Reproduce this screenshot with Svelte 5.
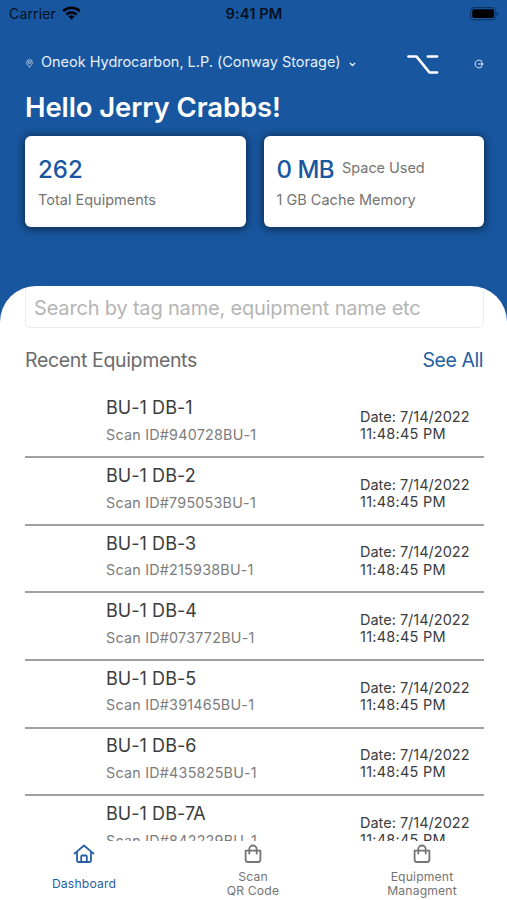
<script lang="ts">
  type Equipment = {
    name: string;
    scanId: string;
    date: string;
    time: string;
  };

  type Tab = {
    id: string;
    lines: string[];
    icon: "home" | "bag";
  };

  const equipments: Equipment[] = [
    ["BU-1 DB-1", "940728BU-1"],
    ["BU-1 DB-2", "795053BU-1"],
    ["BU-1 DB-3", "215938BU-1"],
    ["BU-1 DB-4", "073772BU-1"],
    ["BU-1 DB-5", "391465BU-1"],
    ["BU-1 DB-6", "435825BU-1"],
    ["BU-1 DB-7A", "842229BU-1"],
  ].map(([name, scanId]) => ({
    name,
    scanId,
    date: "7/14/2022",
    time: "11:48:45 PM",
  }));

  const tabs: Tab[] = [
    { id: "dashboard", lines: ["Dashboard"], icon: "home" },
    { id: "scan", lines: ["Scan", "QR Code"], icon: "bag" },
    { id: "equipment", lines: ["Equipment", "Managment"], icon: "bag" },
  ];

  let activeTab = $state("dashboard");
  let query = $state("");
</script>

<div class="screen">
  <header class="header">
    <div class="status">
      <div class="status__carrier">
        <span>Carrier</span>
        <svg width="19" height="14" viewBox="0 0 19 14" aria-hidden="true">
          <g fill="none" stroke="#000" stroke-width="2.5">
            <path d="M1.2 5.2a11.8 11.8 0 0 1 16.6 0" />
            <path d="M4.3 8.6a7.4 7.4 0 0 1 10.4 0" />
          </g>
          <path d="M9.5 13.6 6.5 10.6a4.3 4.3 0 0 1 6 0z" />
        </svg>
      </div>
      <span class="status__time">9:41 PM</span>
      <svg class="status__battery" width="29" height="14" viewBox="0 0 29 14" aria-hidden="true">
        <rect x=".6" y=".6" width="25.2" height="12.2" rx="3.6" fill="none" stroke="#0b315f" stroke-width="1" />
        <rect x="2.3" y="2.3" width="21.8" height="8.8" rx="1.8" />
        <path d="M27 4.7v4a2.2 2.2 0 0 0 0-4z" fill="#0b315f" />
      </svg>
    </div>

    <div class="site">
      <svg class="site__pin" width="7" height="9" viewBox="0 0 7 9" aria-hidden="true">
        <path d="M3.5 8C1.6 6.3.7 4.9.7 3.5a2.8 2.8 0 0 1 5.6 0C6.3 4.9 5.4 6.3 3.5 8z" />
        <circle cx="3.5" cy="3.5" r="1.1" />
      </svg>
      <span class="site__name">Oneok Hydrocarbon, L.P. (Conway Storage)</span>
      <svg class="site__caret" width="7" height="5" viewBox="0 0 7 5" aria-hidden="true">
        <path d="M1.2 1.3 3.5 3.5 5.8 1.3" />
      </svg>
      <svg class="site__option" width="32" height="20" viewBox="0 0 32 20" aria-hidden="true">
        <path d="M1.4 2.6h8.2L22.4 18.4h7.8M20.8 2.6h9.4" />
      </svg>
      <svg class="site__logout" width="10" height="10" viewBox="0 0 10 10" aria-hidden="true">
        <path d="M8 2.5A3.9 3.9 0 1 0 8 7.5M4.3 5h4.7M7.5 3.5 9 5 7.5 6.5" />
      </svg>
    </div>

    <h1>Hello Jerry Crabbs!</h1>

    <div class="cards">
      <div class="card">
        <div class="card__top"><strong>262</strong></div>
        <p>Total Equipments</p>
      </div>
      <div class="card">
        <div class="card__top">
          <strong class="card__space">0 MB</strong>
          <span>Space Used</span>
        </div>
        <p>1 GB Cache Memory</p>
      </div>
    </div>
  </header>

  <main class="sheet">
    <input
      class="search"
      type="text"
      bind:value={query}
      placeholder="Search by tag name, equipment name etc"
      aria-label="Search equipment"
    />

    <div class="heading">
      <h2>Recent Equipments</h2>
      <button type="button">See All</button>
    </div>

    <ul class="list">
      {#each equipments as item (item.scanId)}
        <li>
          <div class="item">
            <span class="item__name">{item.name}</span>
            <span class="item__scan">Scan ID#{item.scanId}</span>
          </div>
          <div class="item__date">
            <span>Date: {item.date}</span>
            <span class="item__time">{item.time}</span>
          </div>
        </li>
      {/each}
    </ul>
  </main>

  <nav class="tabs">
    {#each tabs as tab (tab.id)}
      <button
        type="button"
        class="tab"
        class:active={tab.id === activeTab}
        onclick={() => (activeTab = tab.id)}
      >
        <svg width="22" height="22" viewBox="0 0 22 22" aria-hidden="true">
          {#if tab.icon === "home"}
            <path d="M1.5 10.6 11 2.5l9.5 8.1M4 9v8.5a1.5 1.5 0 0 0 1.5 1.5h11a1.5 1.5 0 0 0 1.5-1.5V9" />
            <path d="M8.2 18.8v-5.3a1 1 0 0 1 1-1h3.6a1 1 0 0 1 1 1v5.3" />
          {:else}
            <path d="M3.6 7.7h14.8v9.1a2.2 2.2 0 0 1-2.2 2.2H5.8a2.2 2.2 0 0 1-2.2-2.2z" />
            <path d="M7.3 10.5V6.2a3.7 3.7 0 0 1 7.4 0v4.3" />
          {/if}
        </svg>
        <span class="tab__label">
          {#each tab.lines as line}
            <span>{line}</span>
          {/each}
        </span>
      </button>
    {/each}
  </nav>
</div>

<style>
  :global(body) {
    background: #fff;
  }
  .screen {
    display: flex;
    flex-direction: column;
    height: 900px;
    overflow: hidden;
    background: #18569f;
    color: #3c3c3c;
    font-family: Inter, "Liberation Sans", sans-serif;
  }
  h1,
  h2,
  p,
  ul {
    margin: 0;
    padding: 0;
  }
  button {
    border: 0;
    padding: 0;
    background: none;
    font-family: inherit;
    cursor: pointer;
  }
  .header {
    flex: none;
    box-sizing: border-box;
    height: 286.4px;
  }
  .status {
    display: grid;
    grid-template-columns: 1fr auto 1fr;
    align-items: center;
    height: 27px;
    padding: 0 8px 0 9px;
    color: #04101f;
    font-size: 14px;
  }
  .status__carrier {
    display: flex;
    align-items: center;
    gap: 6px;
    letter-spacing: 0.15px;
  }
  .status__carrier svg {
    margin-top: -2px;
  }
  .status__time {
    font-weight: 600;
    font-size: 14.7px;
    letter-spacing: 0.1px;
  }
  .status__battery {
    justify-self: end;
  }
  .site {
    display: flex;
    align-items: center;
    height: 28px;
    margin-top: 19px;
    padding: 0 23px 0 26px;
    color: #e6f0fb;
  }
  .site svg {
    flex: none;
    fill: none;
    stroke: currentColor;
    stroke-linecap: round;
    stroke-linejoin: round;
  }
  .site__pin {
    margin-top: 7px;
    opacity: 0.75;
  }
  .site__name {
    margin-left: 8px;
    width: 300px;
    padding-top: 2px;
    font-size: 14.5px;
    letter-spacing: -0.02px;
    white-space: nowrap;
  }
  .site .site__caret {
    margin: 8px 0 0 8px;
    stroke-width: 1.3;
  }
  .site .site__option {
    margin: 7px 0 0 auto;
    stroke: #fff;
    stroke-width: 2.5;
  }
  .site__logout {
    margin: 7px 0 0 35px;
  }
  h1 {
    margin-top: 15px;
    padding-left: 25px;
    color: #fff;
    font-size: 27.5px;
    font-weight: 600;
    letter-spacing: -0.1px;
    line-height: 36px;
  }
  .cards {
    display: grid;
    grid-template-columns: 1fr 1fr;
    gap: 18px;
    margin-top: 11px;
    padding: 0 23px 0 25px;
  }
  .card {
    box-sizing: border-box;
    height: 91px;
    padding: 17px 13px 0;
    border-radius: 6px;
    background: #fff;
    box-shadow: 0 1px 8px 1px rgba(0, 0, 0, 0.55);
    color: #747474;
    font-size: 14.5px;
    white-space: nowrap;
  }
  .card__top {
    display: flex;
    align-items: center;
    gap: 8px;
    height: 32px;
  }
  .card__top span {
    margin-top: -3px;
    letter-spacing: -0.05px;
  }
  .card strong {
    color: #18569f;
    font-size: 24px;
    font-weight: 500;
  }
  .card .card__space {
    letter-spacing: -0.5px;
  }
  .card p {
    margin-top: 5px;
    line-height: 20px;
  }
  .sheet {
    flex: 1;
    min-height: 0;
    padding: 0 23px 0 25px;
    border-radius: 36px 36px 0 0;
    background: #fff;
    overflow: hidden;
  }
  .search {
    display: block;
    box-sizing: border-box;
    width: 100%;
    height: 49px;
    margin-top: -7px;
    padding: 8px 8px 0;
    border: 1px solid #ececec;
    border-radius: 6px;
    outline: 0;
    background: transparent;
    color: #3c3c3c;
    font-family: inherit;
    font-size: 20px;
    letter-spacing: -0.18px;
  }
  .search::placeholder {
    color: #b5b5b5;
    opacity: 1;
  }
  .heading {
    display: flex;
    align-items: center;
    justify-content: space-between;
    height: 30px;
    margin-top: 16.3px;
    padding: 0 1px 0 0;
  }
  .heading h2 {
    color: #6b6b6b;
    font-size: 19.5px;
    font-weight: 400;
    letter-spacing: -0.35px;
  }
  .heading button {
    color: #245fa5;
    font-size: 19.5px;
    letter-spacing: -0.45px;
  }
  .list {
    margin-top: 16px;
    list-style: none;
  }
  .list li {
    display: flex;
    justify-content: space-between;
    box-sizing: border-box;
    height: 67.6px;
    padding: 5.7px 0 0 81px;
    border-bottom: 2px solid #a0a0a0;
    white-space: nowrap;
  }
  .item {
    display: flex;
    flex-direction: column;
  }
  .item__name {
    font-size: 18px;
    letter-spacing: 0.05px;
    line-height: 24px;
  }
  .item__scan {
    margin-top: 4.6px;
    color: #7c7c7c;
    font-size: 14.3px;
    letter-spacing: 0.24px;
    line-height: 20px;
  }
  .item__date {
    display: flex;
    flex-direction: column;
    width: 124px;
    padding-top: 11.8px;
    font-size: 14.5px;
    line-height: 17.3px;
  }
  .item__time {
    letter-spacing: 0.25px;
  }
  .tabs {
    display: grid;
    grid-template-columns: repeat(3, 1fr);
    flex: none;
    height: 59px;
    background: #fff;
  }
  .tab {
    display: flex;
    flex-direction: column;
    align-items: center;
    color: #747474;
    font-size: 12.2px;
    letter-spacing: 0.15px;
    line-height: 14px;
  }
  .tab.active {
    color: #2560a6;
  }
  .tab svg {
    margin: 2px 1px 0 0;
    fill: none;
    stroke: currentColor;
    stroke-width: 1.8;
    stroke-linecap: round;
    stroke-linejoin: round;
  }
  .tab__label {
    display: flex;
    flex-direction: column;
    justify-content: center;
    height: 28px;
    margin: 5.4px 1px 0 0;
  }
</style>
